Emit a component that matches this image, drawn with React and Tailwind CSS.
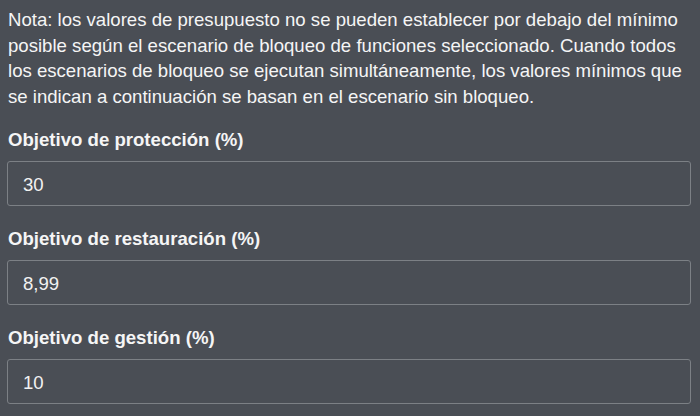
import { useState } from 'react';

const FIELDS = [
  { id: 'proteccion', label: 'Objetivo de protección (%)', value: '30' },
  { id: 'restauracion', label: 'Objetivo de restauración (%)', value: '8,99' },
  { id: 'gestion', label: 'Objetivo de gestión (%)', value: '10' },
];

function Field({ field }) {
  const [value, setValue] = useState(field.value);
  return (
    <div className="mb-[21px]">
      <label htmlFor={field.id} className="block pl-px mb-[9px] text-[18.6px] leading-[24px] font-bold text-[#f5f5f5]">
        {field.label}
      </label>
      <input
        id={field.id}
        type="text"
        value={value}
        onChange={e => setValue(e.target.value)}
        className="block w-full h-[45px] pl-[15px] pr-[15px] pt-[3px] bg-transparent border border-[#7c8085] rounded-[3px] text-[18.6px] text-[#f2f2f2] focus:outline-none"
      />
    </div>
  );
}

export default function App() {
  return (
    <div className="w-[700px] h-[416px] overflow-hidden bg-[#4a4e55] pt-[7px] pl-[7px] pr-[9px] font-['Liberation_Sans',Arial,sans-serif]">
      {/* Aviso */}
      <p className="pl-px mr-[6px] mb-[18px] text-[18.6px] leading-[25.7px] text-[#f5f5f5]">
        Nota: los valores de presupuesto no se pueden establecer por debajo del mínimo posible según el escenario de bloqueo de funciones seleccionado. Cuando todos los escenarios de bloqueo se ejecutan simultáneamente, los valores mínimos que se indican a continuación se basan en el escenario sin bloqueo.
      </p>

      {FIELDS.map(f => (
        <Field key={f.id} field={f} />
      ))}
    </div>
  );
}
